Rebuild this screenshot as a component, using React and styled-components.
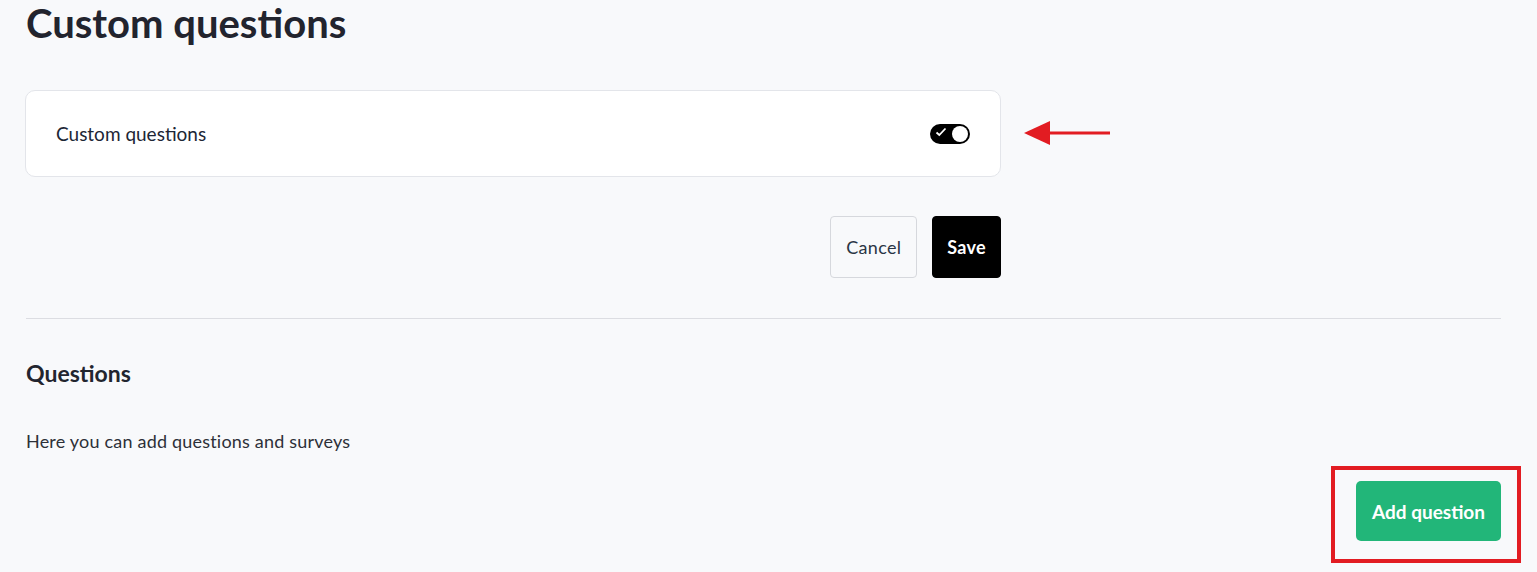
import styled, { createGlobalStyle } from "styled-components";

const Global = createGlobalStyle`
  html, body {
    margin: 0;
    padding: 0;
    background: #f8f9fb;
    font-family: Lato, "Noto Sans", sans-serif;
    color: #22252f;
  }
`;

const Page = styled.div`
  padding: 0 36px 0 26px;
  min-height: 572px;
  box-sizing: border-box;
`;

const Title = styled.h1`
  margin: 0;
  font-size: 40px;
  line-height: 46px;
  font-weight: 700;
  color: #22242e;
  letter-spacing: 0;
`;

const Settings = styled.div`
  width: 976px;
  margin-top: 44px;
  margin-left: -1px;
`;

const Card = styled.div`
  position: relative;
  display: flex;
  align-items: center;
  justify-content: space-between;
  height: 87px;
  box-sizing: border-box;
  padding: 0 30px;
  background: #fff;
  border: 1px solid #e3e5ea;
  border-radius: 10px;
`;

const Label = styled.span`
  font-size: 19px;
  color: #1d2635;
`;

const Toggle = styled.span`
  position: relative;
  display: inline-flex;
  align-items: center;
  width: 40px;
  height: 20px;
  border-radius: 10px;
  background: #000;
`;

const Knob = styled.span`
  position: absolute;
  right: 2px;
  top: 2px;
  width: 16px;
  height: 16px;
  border-radius: 50%;
  background: #fff;
`;

const Check = styled.svg`
  position: absolute;
  left: 5px;
  top: 3px;
`;

const Arrow = styled.svg`
  position: absolute;
  left: 998px;
  top: 29px;
`;

const Actions = styled.div`
  display: flex;
  justify-content: flex-end;
  gap: 15px;
  margin-top: 39px;
`;

const Button = styled.button`
  height: 62px;
  padding: 0 ${(p) => (p.$primary ? "14px" : "15px")};
  font-family: inherit;
  font-size: 18px;
  font-weight: ${(p) => (p.$primary ? 700 : 400)};
  color: ${(p) => (p.$primary ? "#fff" : "#2a3545")};
  background: ${(p) => (p.$primary ? "#000" : "transparent")};
  border: 1px solid ${(p) => (p.$primary ? "#000" : "#d6d8dd")};
  border-radius: 4px;
  letter-spacing: 0.3px;
`;

const Divider = styled.hr`
  margin: 40px 0 0;
  border: 0;
  border-top: 1px solid #dcdde2;
`;

const Subtitle = styled.h2`
  margin: 39px 0 0;
  font-size: 23px;
  line-height: 30px;
  font-weight: 700;
  color: #22252f;
`;

const Text = styled.p`
  margin: 41px 0 0;
  font-size: 18px;
  line-height: 24px;
  color: #2d3038;
  letter-spacing: 0.2px;
`;

const Footer = styled.div`
  display: flex;
  justify-content: flex-end;
  margin-top: 28px;
`;

const Highlight = styled.div`
  position: relative;
`;

const Frame = styled.span`
  position: absolute;
  left: -25px;
  right: -20px;
  top: -15px;
  bottom: -22px;
  border: 4px solid #e21c22;
  pointer-events: none;
`;

const AddButton = styled.button`
  height: 60px;
  padding: 0 16px;
  font-family: inherit;
  font-size: 19px;
  font-weight: 700;
  color: #fff;
  background: #22b679;
  border: 0;
  border-radius: 5px;
`;

export default function App() {
  return (
    <Page>
      <Global />
      <Title>Custom questions</Title>
      <Settings>
        <Card>
          <Label>Custom questions</Label>
          <Toggle>
            <Check width="12" height="10" viewBox="0 0 12 10">
              <path d="M1.5 5.5 L4.3 8 L10.5 1.5" fill="none" stroke="#fff" strokeWidth="1.8" />
            </Check>
            <Knob />
          </Toggle>
          <Arrow width="88" height="26" viewBox="0 0 88 26">
            <polygon points="0,13 26,1 26,25" fill="#e21c22" />
            <rect x="20" y="11.5" width="66" height="3" fill="#e21c22" />
          </Arrow>
        </Card>
        <Actions>
          <Button>Cancel</Button>
          <Button $primary>Save</Button>
        </Actions>
      </Settings>
      <Divider />
      <Subtitle>Questions</Subtitle>
      <Text>Here you can add questions and surveys</Text>
      <Footer>
        <Highlight>
          <AddButton>Add question</AddButton>
          <Frame />
        </Highlight>
      </Footer>
    </Page>
  );
}
